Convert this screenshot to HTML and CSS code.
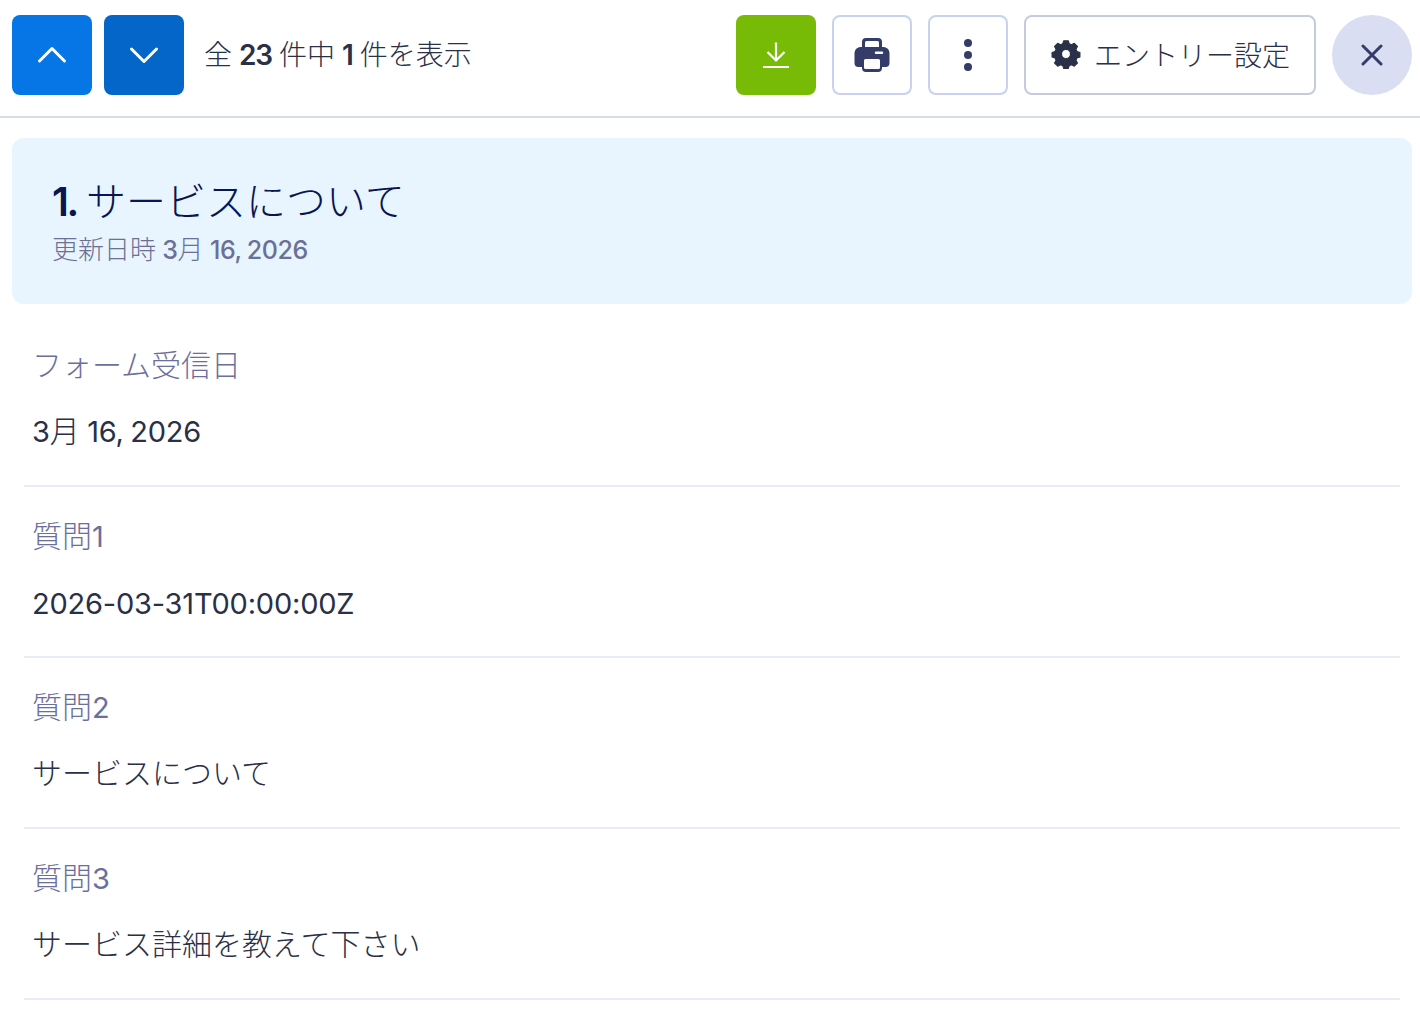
FILE: index.html
```html
<!DOCTYPE html>
<html lang="ja">
<head>
    <meta charset="UTF-8">
    <title>エントリー</title>
    <link rel="stylesheet" href="styles.css">
</head>
<body>
    <div class="toolbar">
        <button class="btn btn-up">
            <svg width="32" height="32" viewBox="0 0 32 32"><path d="M3.500 22 L16 9.500 L28.500 22" fill="none" stroke="#fff" stroke-width="3" stroke-linecap="round" stroke-linejoin="round"/></svg>
        </button>
        <button class="btn btn-down">
            <svg width="32" height="32" viewBox="0 0 32 32"><path d="M3.500 10 L16 22.500 L28.500 10" fill="none" stroke="#fff" stroke-width="3" stroke-linecap="round" stroke-linejoin="round"/></svg>
        </button>
        <div class="count">全 <b>23</b> 件中 <b>1</b> 件を表示</div>
        <button class="btn btn-download">
            <svg width="28" height="28" viewBox="0 0 28 28"><path d="M14 1.500V19M5.500 11 L14 19.500 L22.500 11M1 26H27" fill="none" stroke="#fff" stroke-width="2.200"/></svg>
        </button>
        <button class="btn btn-line">
            <svg width="38" height="38" viewBox="0 0 38 38"><path fill="#343c6a" fill-rule="evenodd" d="M9 11V6a4 4 0 0 1 4-4h12a4 4 0 0 1 4 4v5h1.500a6 6 0 0 1 6 6v10a4 4 0 0 1-4 4H29v1a4 4 0 0 1-4 4H13a4 4 0 0 1-4-4v-1H5.500a4 4 0 0 1-4-4V17a6 6 0 0 1 6-6zM12 11h14V6.500a1.500 1.500 0 0 0-1.500-1.500h-11A1.500 1.500 0 0 0 12 6.500zM23 15.500a1 1 0 0 0 0 2.500h6a1 1 0 0 0 0-2.500zM12.500 23a1.500 1.500 0 0 0-1.500 1.500v7a1.500 1.500 0 0 0 1.500 1.500h13a1.500 1.500 0 0 0 1.500-1.500v-7a1.500 1.500 0 0 0-1.500-1.500z"/></svg>
        </button>
        <button class="btn btn-line">
            <svg width="12" height="36" viewBox="0 0 12 36"><g fill="#343c6a"><circle cx="6" cy="6" r="4"/><circle cx="6" cy="18" r="4"/><circle cx="6" cy="30" r="4"/></g></svg>
        </button>
        <button class="btn-settings">
            <svg width="30" height="30" viewBox="0 0 30 30"><path fill="#293047" stroke="#293047" stroke-width="1.200" stroke-linejoin="round" fill-rule="evenodd" d="M12.800 1.800h4.400l1 3 2.300 1 2.800-1.500 3.100 3.100-1.500 2.800 1 2.300 3 1v4.400l-3 1-1 2.300 1.500 2.800-3.100 3.100-2.800-1.500-2.300 1-1 3h-4.400l-1-3-2.300-1-2.800 1.500-3.100-3.100 1.500-2.800-1-2.300-3-1v-4.400l3-1 1-2.300-1.500-2.800 3.100-3.100 2.800 1.500 2.300-1zM15 10.500a4.500 4.500 0 1 0 0 9 4.500 4.500 0 0 0 0-9z"/></svg>
            <span>エントリー設定</span>
        </button>
        <button class="btn-close">
            <svg width="22" height="22" viewBox="0 0 22 22"><path d="M2 2L20 20M20 2L2 20" fill="none" stroke="#343c6a" stroke-width="3" stroke-linecap="round"/></svg>
        </button>
    </div>
    <div class="banner">
        <h1><b>1.</b> サービスについて</h1>
        <p>更新日時 <span class="num">3</span>月 <span class="num">16, 2026</span></p>
    </div>
    <div class="fields">
        <div class="field">
            <div class="label">フォーム受信日</div>
            <div class="value"><span class="num">3</span>月 <span class="num">16, 2026</span></div>
        </div>
        <div class="field">
            <div class="label">質問<span class="num">1</span></div>
            <div class="value"><span class="num">2026-03-31T00:00:00Z</span></div>
        </div>
        <div class="field">
            <div class="label">質問<span class="num">2</span></div>
            <div class="value value-ja">サービスについて</div>
        </div>
        <div class="field">
            <div class="label">質問<span class="num">3</span></div>
            <div class="value value-ja">サービス詳細を教えて下さい</div>
        </div>
    </div>
</body>
</html>
```

FILE: styles.css
```css
* {
    box-sizing: border-box;
}
body {
    margin: 0;
    background-color: #fff;
    color: #293047;
    font-family: Inter, "Noto Sans CJK JP", sans-serif;
    overflow: hidden;
}
button {
    font-family: inherit;
    padding: 0;
    cursor: pointer;
}
.toolbar {
    display: flex;
    align-items: center;
    gap: 12px;
    height: 118px;
    padding: 15px 8px 21px 12px;
    border-bottom: 2px solid #d3dee6;
}
.btn {
    display: flex;
    align-items: center;
    justify-content: center;
    flex: none;
    width: 80px;
    height: 80px;
    border: 0;
    border-radius: 8px;
}
.btn-up {
    background-color: #0675e6;
}
.btn-down {
    background-color: #0466c8;
}
.btn-download {
    background-color: #78bb07;
    margin-right: 4px;
}
.btn-line {
    background-color: #fff;
    border: 2px solid #c8d1ed;
    margin-right: 4px;
}
.count {
    flex: 1;
    margin-left: 8px;
    font-size: 28px;
    font-weight: 300;
    line-height: 40px;
    word-spacing: -1px;
}
.count b {
    font-weight: 600;
    letter-spacing: -1px;
}
.btn-settings {
    display: flex;
    align-items: center;
    gap: 13px;
    flex: none;
    width: 292px;
    height: 80px;
    padding: 0 0 2px 25px;
    background-color: #fff;
    border: 2px solid #c5cbdc;
    border-radius: 8px;
    margin-right: 4px;
    color: #293047;
    font-size: 28px;
    font-weight: 300;
}
.btn-close {
    display: flex;
    align-items: center;
    justify-content: center;
    flex: none;
    width: 80px;
    height: 80px;
    border: 0;
    border-radius: 50%;
    background-color: #dadef2;
}
.banner {
    height: 166px;
    margin: 20px 8px 0 12px;
    padding: 38px 40px 0;
    background-color: #e8f5ff;
    border-radius: 12px;
}
.banner h1 {
    margin: 0;
    color: #0a1551;
    font-size: 40px;
    font-weight: 300;
    line-height: 52px;
    word-spacing: -2px;
}
.banner h1 b {
    font-weight: 600;
    letter-spacing: -2.500px;
}
.banner p {
    margin: 4px 0 0;
    color: #6c7096;
    font-size: 26px;
    font-weight: 300;
    line-height: 36px;
    word-spacing: -1px;
}
.banner .num {
    font-size: 25px;
    font-weight: 500;
    letter-spacing: -0.400px;
    word-spacing: -1px;
}
.fields {
    margin: 12px 20px 0 24px;
}
.field {
    height: 171px;
    padding: 29px 8px 0;
    border-bottom: 2px solid #e8ecf6;
}
.label {
    color: #6c6f9c;
    font-size: 30px;
    font-weight: 300;
    line-height: 40px;
}
.value {
    margin-top: 26px;
    color: #293047;
    font-size: 30px;
    font-weight: 300;
    line-height: 40px;
    word-spacing: -1px;
}
.value-ja {
    margin-top: 25px;
}
.num {
    font-size: 29px;
    font-weight: 400;
    letter-spacing: -0.200px;
    word-spacing: -1.500px;
}
```
